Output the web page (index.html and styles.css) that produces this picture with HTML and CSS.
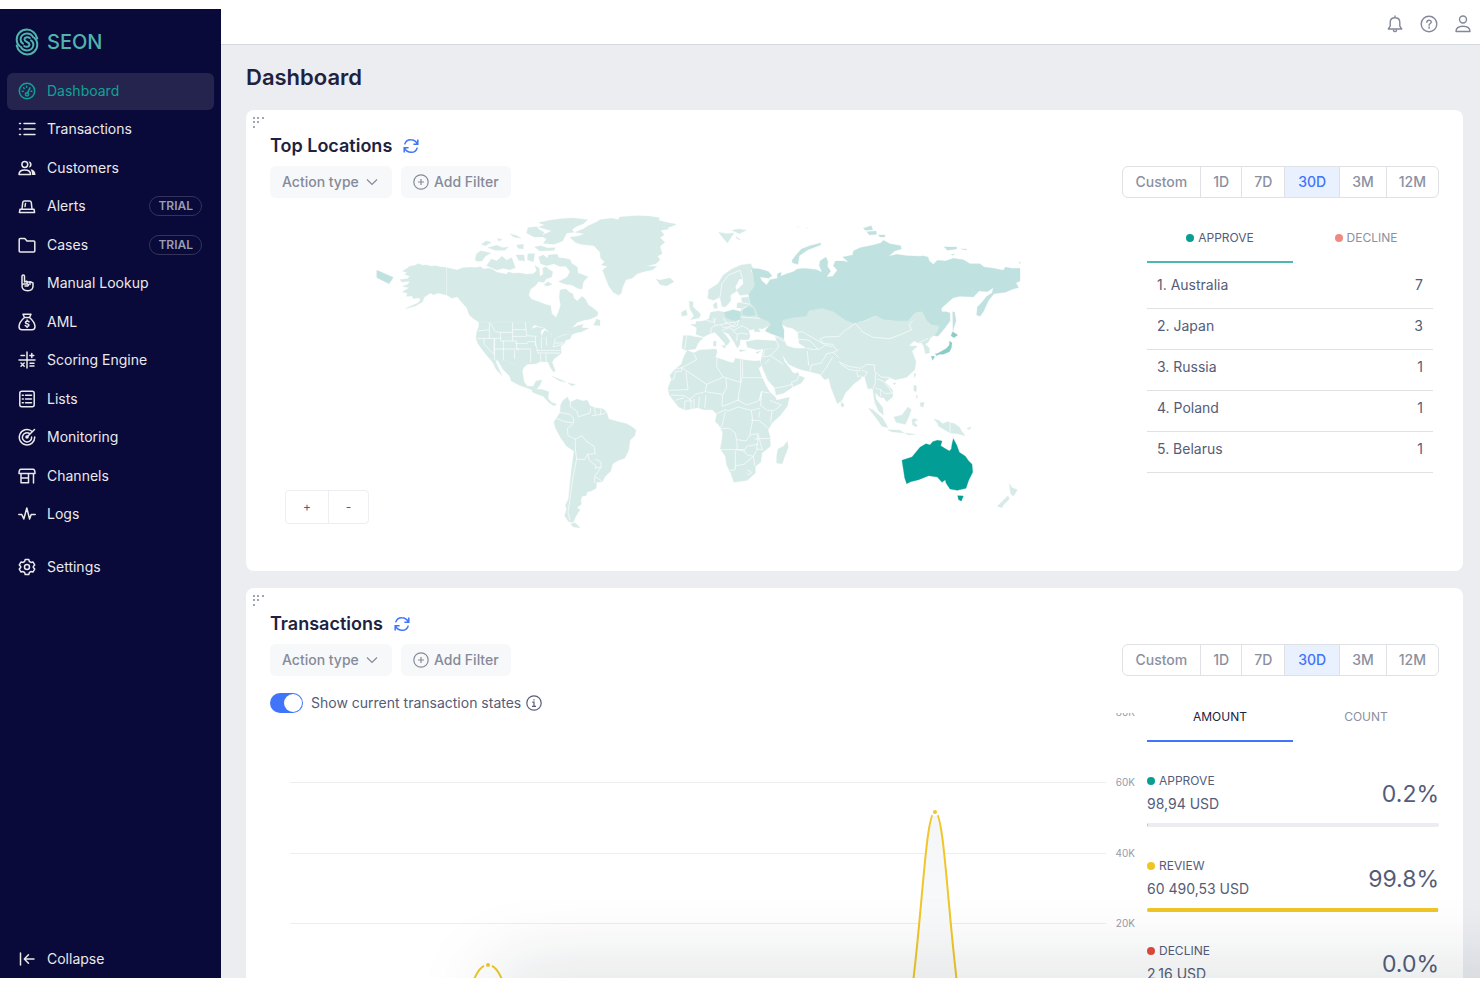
FILE: index.html
```html
<!DOCTYPE html>
<html lang="en">
<head>
<meta charset="utf-8">
<meta name="viewport" content="width=device-width, initial-scale=1">
<title>SEON Dashboard</title>
<link rel="stylesheet" href="styles.css">
</head>
<body>
<svg class="defs" aria-hidden="true">
  <symbol id="refresh" viewBox="0 0 16 16"><path d="M14.8 1.6v4.6h-4.4M1.2 14.4V9.8h4.4M1.7 6.4A6.3 6.3 0 0 1 8 1.7c2.800 0 5 1.500 6.500 4.200M14.300 9.600A6.300 6.300 0 0 1 8 14.300c-2.800 0-5-1.500-6.500-4.200"/></symbol>
  <symbol id="chevron" viewBox="0 0 12 8"><path d="M1 1.500l5 5 5-5"/></symbol>
  <symbol id="plus" viewBox="0 0 16 16"><path d="M8 .8a7.200 7.200 0 1 1 0 14.400A7.200 7.200 0 0 1 8 .8zM8 5v6M5 8h6"/></symbol>
  <symbol id="drag" viewBox="0 0 12 12"><path d="M0 0h2v2H0zM4 0h2v2H4zM9 0h2v2H9zM0 4h2v2H0zM4 4h2v2H4zM0 9h2v2H0z"/></symbol>
</svg>
<div class="app">
  <aside class="sidebar">
    <a class="logo" href="#">
      <svg viewBox="0 0 24 28" aria-hidden="true">
        <path d="M22.300 10.500C21 4.800 16.500 1.600 12 1.600 6 1.600 1.700 6.200 1.700 11.600c0 3 1 5 2.800 6.500"/>
        <path d="M18.200 9.200C16.800 6.600 14.500 5.400 12 5.400c-3.600 0-6.400 2.600-6.400 5.900 0 2 .8 3.500 2.400 4.400"/>
        <path d="M1.700 17.500C3 23.200 7.500 26.400 12 26.400c6 0 10.300-4.600 10.300-10 0-3-1-5-2.800-6.500"/>
        <path d="M5.800 18.800C7.200 21.400 9.500 22.600 12 22.600c3.600 0 6.400-2.600 6.400-5.900 0-2-.8-3.500-2.400-4.400"/>
        <path d="M14.800 10C13.300 8.700 9.500 9 9.500 11.500c0 2.500 5 2.500 5 5 0 2.500-3.800 2.800-5.300 1.500"/>
      </svg>
      <span>SEON</span>
    </a>
    <nav class="nav">
      <a class="item active" href="#"><svg viewBox="0 0 18 18"><circle cx="9" cy="9" r="7.700"/><circle cx="9" cy="12.300" r="1.600"/><path d="M9.500 10.800L12 5.800M4.300 9.200h.9M5.600 5.800l.7.700M8.600 4.200v1M13 9.200h.9"/></svg><span>Dashboard</span></a>
      <a class="item" href="#"><svg viewBox="0 0 18 18"><path d="M6 3.500h11M6 9h11M6 14.500h11M1.500 3.500h1M1.500 9h1M1.500 14.500h1"/></svg><span>Transactions</span></a>
      <a class="item" href="#"><svg viewBox="0 0 18 18"><circle cx="6.800" cy="5.500" r="2.900"/><path d="M1 15.500c0-3 2.200-4.600 5.800-4.600s5.800 1.600 5.800 4.600z"/><path class="solid" d="M10.500 2.500a3 3 0 1 1 .2 6 4.500 4.500 0 0 0-.2-6zM12.500 10.200c3.300.3 5 2.200 5 5.800h-3.400c0-2.300-.5-4-1.600-5.800z"/></svg><span>Customers</span></a>
      <a class="item" href="#"><svg viewBox="0 0 18 18"><path d="M4 12l.7-6.300C4.900 4.400 5.600 4 6.500 4h5c.9 0 1.600.4 1.800 1.700L14 12M2 12.200h14l.6 3.300H1.400zM7.500 6.500L7 9.500"/></svg><span>Alerts</span><span class="badge">TRIAL</span></a>
      <a class="item" href="#"><svg viewBox="0 0 18 18"><path d="M1.200 15V3.500c0-.6.400-1 1-1h4.600L9 5h6.800c.6 0 1 .4 1 1v9c0 .6-.4 1-1 1H2.200c-.6 0-1-.4-1-1z"/></svg><span>Cases</span><span class="badge">TRIAL</span></a>
      <a class="item" href="#"><svg viewBox="0 0 18 18"><path d="M4 10V2.300c0-1.700 2.500-1.700 2.500 0V8l2-.8 1.800.9 1.900-.4 2.800 1.300v3c0 3-2 4.700-5.200 4.700-3.300 0-5.800-1.500-5.800-4.700 0-1.400.8-2 1.800-2h3.700c1.300 0 1.300 2 0 2H7M9 7.500V10M12 8v2.500"/></svg><span>Manual Lookup</span></a>
      <a class="item" href="#"><svg viewBox="0 0 18 18"><path d="M5 1.200h8l-1.500 3.300h-5zM6.500 4.500C3 7.500 1 10.500 1 13.500c0 2.300 1.200 3.300 3 3.300h10c1.800 0 3-1 3-3.300 0-3-2-6-5.500-9"/><path d="M11 8.700c-1-.9-3.600-.8-3.600.7 0 1.600 3.600 1 3.600 2.700 0 1.600-2.800 1.600-3.800.5M9.100 7v1M9.100 13.500v1"/></svg><span>AML</span></a>
      <a class="item" href="#"><svg viewBox="0 0 18 18"><path d="M9 1v16M1 9h16M3 4.500h3.500M11.800 4.500h4M13.800 2.500v4M3 12l3.200 3.200M6.200 12L3 15.200M12 12.200h4M12 15h4"/></svg><span>Scoring Engine</span></a>
      <a class="item" href="#"><svg viewBox="0 0 18 18"><rect x="1.800" y="1.200" width="14.400" height="15.600" rx="2"/><path d="M7.500 5.200h6M7.500 9h6M7.500 12.800h6M4.300 5.200h1M4.300 9h1M4.300 12.800h1"/></svg><span>Lists</span></a>
      <a class="item" href="#"><svg viewBox="0 0 18 18"><path d="M13.500 3A7.700 7.700 0 1 0 16.700 9M11.500 5.500A4.600 4.600 0 1 0 13.600 9M9 9l7.500-7.500"/><circle class="solid" cx="9" cy="9" r="1.800"/></svg><span>Monitoring</span></a>
      <a class="item" href="#"><svg viewBox="0 0 18 18"><path d="M3 2.200h12c1.200 0 2 2 2 4.300H1C1 4.200 1.800 2.200 3 2.200zM3 6.500v9.300h7.500V6.500M15.500 6.500v9.500M3 11h7.500"/></svg><span>Channels</span></a>
      <a class="item" href="#"><svg viewBox="0 0 18 18"><path d="M.8 9.500h3l2 4.500 3-11 2.800 11 1.600-4.500h4"/></svg><span>Logs</span></a>
    </nav>
    <a class="item settings" href="#"><svg viewBox="0 0 18 18"><path d="M7.200 1.500h3.600l.6 2 1.500.9 2-.5 1.800 3L15.300 8.500v1l1.400 1.600-1.800 3-2-.5-1.500.9-.6 2H7.200l-.6-2-1.500-.9-2 .5-1.800-3 1.400-1.600v-1L1.300 6.900l1.800-3 2 .5 1.500-.9z"/><circle cx="9" cy="9" r="2.500"/></svg><span>Settings</span></a>
    <button class="item collapse" type="button"><svg viewBox="0 0 18 18"><path d="M2.500 3v12M16 9H7M10.500 4.800L6.300 9l4.200 4.200"/></svg><span>Collapse</span></button>
  </aside>

  <div class="main">
    <header class="topbar">
      <button type="button" aria-label="Notifications"><svg viewBox="0 0 18 18"><path d="M2.300 14h13.400l-1.900-2.800V7.500c0-3-2-4.700-4.800-4.700S4.200 4.500 4.200 7.500v3.700zM9 1v1.500M7.500 15.500a1.600 1.600 0 0 0 3 0"/></svg></button>
      <button type="button" aria-label="Help"><svg viewBox="0 0 18 18"><circle cx="9" cy="9" r="7.800"/><path d="M6.900 7.300C6.900 4.700 11.300 4.700 11.300 7c0 1.600-2.200 1.500-2.200 3.200M9.100 12v1.300"/></svg></button>
      <button type="button" aria-label="Account"><svg viewBox="0 0 18 18"><circle cx="9" cy="4.500" r="3.500"/><path d="M2 16.500c0-3.500 2.300-5.300 7-5.300s7 1.800 7 5.300z"/></svg></button>
    </header>

    <main class="page">
      <h1>Dashboard</h1>

      <section class="card">
        <svg class="drag"><use href="#drag"/></svg>
        <div class="title"><h2>Top Locations</h2><button type="button" aria-label="Refresh top locations"><svg><use href="#refresh"/></svg></button></div>
        <div class="toolbar">
          <label class="filter select"><select aria-label="Action type"><option>Action type</option></select><svg><use href="#chevron"/></svg></label>
          <button class="filter" type="button"><svg><use href="#plus"/></svg>Add Filter</button>
          <div class="range">
            <button type="button">Custom</button><button type="button">1D</button><button type="button">7D</button><button type="button" class="on" aria-pressed="true">30D</button><button type="button">3M</button><button type="button">12M</button>
          </div>
        </div>
        <div class="body">
          <div class="map">
            <svg viewBox="270 214 865 333" role="img" aria-label="World map of top locations">
              <!-- North America -->
              <g class="land" transform="translate(370 205) scale(.33333)">
                <path d="M228 187L212 186 195 182 182 184 170 180 158 181 145 176 132 182 118 184 112 190 98 198 112 203 104 208 120 214 112 221 90 224 96 231 120 229 114 238 98 244 118 248 108 254 97 261 112 264 110 274 126 273 130 281 146 278 152 284 144 294 130 300 106 311 136 303 158 290 162 277 182 264 190 269 206 264 228 270z"/>
                <path d="M230 188L248 192 262 195 276 189 300 187 318 188 330 185 342 192 358 190 372 196 380 202 410 208 415 201 430 205 450 204 470 208 490 206 500 197 495 181 507 190 510 215 520 206 518 190 528 185 538 194 548 200 545 216 528 222 522 232 505 230 495 243 482 252 476 270 484 282 505 290 526 298 542 302 545 325 558 338 566 320 572 300 568 280 570 255 588 252 598 262 608 266 612 280 622 288 636 274 646 282 655 300 668 308 684 322 682 332 662 342 640 346 622 352 606 368 640 358 634 368 656 370 632 382 625 376 608 386 584 388 562 396 546 402 545 387 522 368 492 360 475 352 327 352 312 342 298 330 290 308 272 288 262 275 246 280 230 270z"/>
                <path d="M327 352L475 352 492 360 484 372 500 366 522 370 512 378 514 394 524 376 542 384 546 400 562 398 584 390 604 386 622 362 634 362 630 380 606 388 600 402 586 406 584 416 572 424 574 445 552 462 546 472 556 498 550 500 540 485 534 470 510 470 498 476 472 478 461 488 456 498 440 480 425 475 412 466 372 464 356 458 340 438 324 416 318 400 321 376 326 368z"/>
                <path d="M357 459L372 465 412 466 426 476 440 480 457 498 462 530 472 544 490 544 498 528 516 525 510 540 500 552 488 556 474 550 448 541 424 528 418 512 400 494 383 466 376 466 384 486 396 512 378 492 368 472z"/>
                <path d="M490 553L514 553 536 560 534 580 544 592 560 598 552 602 538 594 520 574 498 566 486 560z"/>
                <path d="M671 360L680 342 690 346 690 362zM546 514L562 520 588 532 570 528zM594 534L616 538 606 543z"/>
                <path d="M506 53L540 46 575 41 610 39 653 44 640 56 620 64 606 74 612 82 590 84 578 108 552 118 520 115 530 102 512 92 545 78 506 66 524 60zM474 68L500 65 508 74 522 82 514 96 492 96 470 84zM494 126L512 122 532 129 556 128 552 136 510 138zM440 120L460 118 460 132 444 130zM420 86L440 92 454 100 432 96zM334 118L348 108 364 112 346 122zM354 128L380 121 398 128 416 126 404 136 376 136zM316 162L320 146 332 138 362 144 346 154 336 168 318 168zM350 182L364 162 380 168 396 154 410 166 425 158 436 188 420 194 400 190 380 195zM382 100L396 104 386 108zM438 150L462 150 464 168 446 166zM474 146L494 146 490 170 472 164zM506 156L520 150 532 160 536 150 562 148 566 158 584 160 600 164 606 176 622 186 624 204 654 215 640 230 636 252 622 250 606 240 588 238 566 230 592 216 600 200 588 184 568 184 552 176 530 182 512 176zM522 240L534 230 546 238 532 243z"/>
                <g class="lines">
                  <path d="M358 352v22l-36 4M358 374v26M320 400h72M392 382h36M362 356l14 24 16 2v26M428 352v56M428 374h40M428 394h42M342 400v18l30 30v-48M374 400v64M374 432h66M400 408v56M392 408h48v24l8 4M436 416h38M440 432h42M434 436v26M466 352l4 40 30 2M470 410h26l8 36M482 432v40M496 394v30M514 396v34M528 396l2 26M500 436h72M504 444h68M512 446v24M528 446v24M556 400l-6 26 34-10M554 414h30"/>
                </g>
              </g>
              <!-- Greenland and South America -->
              <g class="land" transform="translate(550 205) scale(.33333)">
                <path d="M60 97L84 94 104 86 76 82 100 72 115 62 142 50 150 44 186 40 204 44 210 36 260 32 300 34 328 38 326 46 348 52 378 58 352 66 356 72 332 76 342 90 330 98 344 112 330 124 336 146 322 154 330 164 318 176 288 184 320 184 308 194 280 200 262 206 246 220 228 224 218 246 214 264 206 271 190 262 176 242 166 216 158 196 172 184 154 180 164 170 152 160 150 142 132 122 92 118 76 112zM318 222L330 226 360 220 371 230 350 242 330 238z"/>
                <path d="M32 600L38 588 52 576 60 592 82 582 96 588 112 586 120 602 134 608 160 612 170 622 176 642 204 650 230 656 250 668 258 676 254 692 240 706 236 736 224 760 206 766 188 776 182 798 164 816 158 830 140 832 138 850 124 858 112 860 108 872 96 874 92 886 94 898 80 908 90 914 76 936 70 952 56 950 44 932 50 912 46 902 56 880 60 836 66 784 72 738 50 724 32 698 16 668 12 652 20 638 30 624zM62 956L76 954 90 968 70 966z"/>
                <g class="lines"><path d="M20 640l24 10 26 4v-16l-12-10-28-6M62 590l-2 14 20 14 6 18 16-6 18-6 2-16M134 608l2 20M152 612v18M170 622l-16 6-28 4M70 656l-18 14 2 22 22 10v32M76 702l20-10 12 16 24 16 4 22-24 2-8 16-24-2-4-30M112 746l6 20 20 16-2 8 18-4-2-16-16-8M154 786l-20 28 24 16M134 816v18M80 762l-12 60-8 60-6 40 6 24"/></g>
              </g>
              <!-- Europe, Africa and western Asia -->
              <g class="land" transform="translate(660 215) scale(.33333)">
                <path d="M143 250L146 224 174 206 190 180 216 162 244 150 272 146 278 158 272 166 280 186 284 212 266 238 240 241 230 226 250 206 248 192 238 192 226 216 230 228 212 240 212 258 196 276 186 274 180 246 160 256zM160 268L170 262 172 280 162 280z"/>
                <path d="M130 318L146 312 152 292 174 288 195 292 220 285 242 290 246 280 230 278 232 264 246 262 244 248 266 246 268 264 284 278 296 304 326 316 331 330 306 342 294 340 302 350 284 350 282 342 266 346 270 364 266 374 240 374 240 388 232 400 224 384 206 356 190 350 184 346 200 364 210 378 204 388 196 392 194 384 176 364 164 352 150 356 130 366 108 358 110 338 92 328 108 328 108 320z"/>
                <path d="M70 362L94 362 130 368 116 382 106 402 76 406 66 400zM160 380L168 378 168 394 160 392zM184 392L198 392 194 400zM238 404L258 406 240 410zM288 412L302 408 292 416z"/>
                <path d="M88 258L100 262 98 274 108 284 122 298 118 308 92 314 102 302 90 282zM64 292L78 284 82 300 66 304zM0 196L30 190 40 200 18 212 0 208zM176 52L200 56 222 54 214 66 202 84 190 70zM216 46L236 42 259 46 238 56zM228 64L242 74 232 72zM0 28L48 28 30 36 0 40zM408 36h10M436 38h10"/>
                <path d="M82 406L100 414 120 405 168 402 172 412 166 426 182 432 206 440 220 444 226 430 248 434 280 438 300 437 304 452 296 460 304 482 318 512 330 532 346 546 350 556 388 547 382 574 360 602 336 624 324 646 330 664 331 694 306 714 302 742 286 754 286 774 262 796 222 802 212 774 200 750 196 724 181 702 186 676 188 652 178 632 166 620 170 598 158 584 130 584 114 578 76 585 56 576 42 558 28 540 24 520 34 494 30 480 46 462 64 448 72 424z"/>
                <path d="M382 679L385 696 366 746 350 744 350 724 354 702 370 694z"/>
                <path d="M302 440L310 404 350 400 366 418 374 440 390 460 396 470 404 476 414 472 418 482 434 488 424 504 398 516 372 534 348 540 344 518 324 496 310 464z"/>
                <path d="M258 380L290 374 320 376 350 378 346 364 370 370 380 392 404 400 440 400 416 384 414 352 398 340 380 336 366 328 368 316 400 308 440 304 446 288 486 280 520 290 556 316 604 326 604 490 582 506 556 534 546 556 532 566 514 520 506 490 494 494 480 478 450 470 424 464 408 458 386 448 366 418 350 400 310 402 290 404 262 396z"/>
                <path d="M544 560L553 570 548 577 543 572z"/>
                <path class="russia" d="M274 160L300 162 326 170 336 182 326 190 300 186 306 198 320 210 330 194 352 190 352 176 364 172 362 184 380 176 400 170 412 162 434 160 470 164 486 172 478 152 480 138 498 126 504 140 502 154 512 168 500 186 518 184 532 166 520 152 526 138 550 138 566 142 548 126 578 120 580 108 600 98 640 90 662 84 670 76 690 86 722 92 724 102 704 108 686 124 710 118 740 122 782 124 786 122 804 126 808 138 820 148 832 136 856 138 880 130 910 134 930 146 960 146 972 156 1000 160 1030 166 1036 156 1054 160 1080 160 1080 198 1068 204 1076 218 1060 222 1036 232 1002 236 986 256 970 290 960 304 950 300 952 276 966 262 980 244 996 234 1000 218 982 230 958 228 940 246 900 244 880 248 864 262 844 280 846 290 860 290 870 294 870 318 854 340 834 364 816 360 838 334 814 330 800 318 786 290 766 294 744 318 706 318 668 314 646 302 616 316 586 326 556 316 520 290 486 280 446 288 440 304 400 308 368 316 366 328 372 346 372 370 350 362 320 352 316 346 332 328 324 318 296 306 284 278 270 264 266 238 284 212 280 186z"/>
                <path class="russia" d="M396 136L410 118 424 102 450 92 482 84 482 90 444 104 418 122 414 148 398 144zM610 40L634 32 638 44 616 46zM620 50L648 48 650 58 628 60zM655 60L676 60 674 66 660 66zM852 95L862 96 890 96 890 102 862 106zM904 102L920 102 918 105zM874 118L884 118 878 121zM878 290L884 292 888 318 882 336 879 348zM1078 142h3v3h-3z"/>
                <path class="russia" d="M194 292L220 284 242 290 243 314 228 318 206 312 196 306zM246 298L250 284 264 274 280 280 286 300 264 304z"/>
                <g class="lines"><path d="M180 246l6-40 20-26 34-14M240 166l8 26M134 314l26 8 10-14M152 356l2-18 12-6-6-24M166 332l38-8M190 308l8 16 28-2 14-8M182 330l10 8 24-4 12-8M186 346l22-8 14 8 24-14 22 12M206 328l18 8 10-6M218 346l14 12 10-4 22 4M232 358l-2 20M240 306l60 4M236 318l-4 12M246 282l16-8M242 262l26 6M94 362l38 6M80 364l-6 40M300 350l28 4"/>
                <path d="M102 416l8 18-44 24-20 4M66 458v10l-20 2-4 22-12 2M66 458l74 50 50-22-20-30 2-44M78 470l6 54-56 2M140 508l-4 22-30 8-18 16M190 486l52 16V434M248 436v52h66M246 488l-8 38-4 30 26 14 36-12 10-30M198 488l2 30-12 22-2 34 12-4 40-16M136 530l52 8M32 540l40 2 20 12 2 30M46 556l26-8M74 584v-26h24M102 582v-30M116 580l2-34M134 580l4-40M166 598l30-14 8 4 30-12 40 10 26-6M196 590l-10 44-8 4M182 640h26l18 14 6 36-2 16M182 704h70M232 674l26 4 12-18 22-4 2 32-34 6-8 14-20-4M274 586l4 30-6 30-2 14M272 616h24l30 24M300 556l4-26 24 4M304 532l-2 40 20 14h20l22-16-34-14M300 588l-4 20M336 588l-4 34M294 656l10 38 4 12M292 686l-2 16 16 2M226 708v56l-16 2M226 752l26-4 28-24 4 28M252 708l10 12 18 4 12-22M262 768l8-2 4 8-8 6-6-6M284 672l46-2"/>
                <path d="M314 406l-6 20 24-4 24-26M332 422l38 26M316 446l12-14M344 520l30-6 24-6M398 516l-4-14 16-6 8-16M350 378l6 18M346 364l28 16M414 352l14-2 26 16 14 8 22 12-10-14 14-6 46-2 16-20 24-4 20-20M416 384v-12l32 4 26 26M440 400l22 4 18-2 16-12 22 6M446 452l-4-44M450 470l4-20 30-6 16-28 20-4M482 480l18-24 18-30M520 412l20-10M520 412l22 22 30 20 32 8M490 386l28 2 12 18M572 460l32 12"/></g>
              </g>
              <!-- Eastern Asia and Oceania -->
              <g class="land" transform="translate(840 215) scale(.33333)">
                <path d="M-4 345L20 336 46 325 76 318 106 302 130 314 166 318 204 318 226 294 246 290 260 318 274 330 298 334 290 354 270 370 266 380 256 388 268 400 268 414 256 416 252 396 246 384 236 384 222 378 206 392 232 394 216 408 228 440 224 464 200 487 166 494 150 488 134 500 158 526 158 546 140 560 132 548 118 546 106 532 108 552 128 578 130 600 116 588 104 562 98 520 84 522 74 486 60 482 40 496 -4 520z"/>
                <path d="M86 580L98 584 128 610 144 638 126 634 108 608zM144 644L180 646 192 654 154 650zM194 654L212 656 226 658 208 660zM162 606L186 600 204 576 214 584 206 606 196 628 168 622zM216 614L222 610 234 616 222 620 232 632 228 636 218 630zM222 476L228 476 224 488zM222 510L230 514 228 532 221 526zM240 564L252 562 250 576 242 574zM228 540L234 546 230 550zM160 504L168 504 164 510zM282 612L296 616 308 626 322 620 344 626 358 636 366 650 376 662 352 656 330 654 314 644 296 634 292 624zM380 640L394 636 388 644zM508 806L516 818 532 824 520 844 512 836zM504 842L508 852 490 870 486 878 472 874z"/>
                <g class="lines"><path d="M46 325l22 26 32 16 50 4 36-14 28-12-6-16 10-12M-4 366l12-14 38-27M-4 440l30 14 36 6 18-12 24 2 0 20 20 16 26 2M0 446l28 18 34 4M50 470l4 16 8-4M66 466l16 6-10 16M106 474l0 30-6 16M112 492l20 8 16 20 8 14-20 2-14-12-16-4M122 524v20M236 384l28-14M330 622v32"/></g>
                <path class="australia" d="M186 736L216 726 240 697 258 686 270 690 278 680 292 676 306 678 302 692 314 700 328 708 334 702 336 688 340 671 350 690 358 712 376 724 386 738 396 748 398 772 386 796 378 820 352 826 330 822 318 804 316 794 306 802 292 786 266 782 236 794 212 800 200 806 194 788 190 762zM353 842L370 843 364 858 356 854z"/>
                <path class="japan" d="M329 378L336 384 334 398 328 410 310 418 288 418 306 408 320 400 328 390zM338 350L353 360 342 368 333 362zM274 424L284 424 278 436zM286 416l10 2-6 4z"/>
              </g>
              <path class="land russia" d="M377 270.500l16 7-4 6-12-6z"/>
            </svg>
            <div class="zoom"><button type="button" aria-label="Zoom in">+</button><button type="button" aria-label="Zoom out">-</button></div>
          </div>
          <div class="side">
            <div class="tabs teal">
              <button type="button" class="on"><i class="dot approve"></i>APPROVE</button>
              <button type="button"><i class="dot faded"></i>DECLINE</button>
            </div>
            <table class="places">
              <tr><td>1. Australia</td><td>7</td></tr>
              <tr><td>2. Japan</td><td>3</td></tr>
              <tr><td>3. Russia</td><td>1</td></tr>
              <tr><td>4. Poland</td><td>1</td></tr>
              <tr><td>5. Belarus</td><td>1</td></tr>
            </table>
          </div>
        </div>
      </section>

      <section class="card">
        <svg class="drag"><use href="#drag"/></svg>
        <div class="title"><h2>Transactions</h2><button type="button" aria-label="Refresh transactions"><svg><use href="#refresh"/></svg></button></div>
        <div class="toolbar">
          <label class="filter select"><select aria-label="Action type"><option>Action type</option></select><svg><use href="#chevron"/></svg></label>
          <button class="filter" type="button"><svg><use href="#plus"/></svg>Add Filter</button>
          <div class="range">
            <button type="button">Custom</button><button type="button">1D</button><button type="button">7D</button><button type="button" class="on" aria-pressed="true">30D</button><button type="button">3M</button><button type="button">12M</button>
          </div>
        </div>
        <div class="body amounts">
          <div class="chart">
            <label class="switch"><input type="checkbox" role="switch" checked><span>Show current transaction states</span>
              <svg viewBox="0 0 16 16"><circle cx="8" cy="8" r="7.200"/><path d="M6.300 7.200H8v4M6 11.300h4M8 4.300v1.200"/></svg></label>
            <svg class="plot" viewBox="0 0 865 340" role="img" aria-label="Transaction amount by day">
              <defs><linearGradient id="fill" x1="0" y1="0" x2="0" y2="1"><stop offset="0" stop-color="#f3f5f7"/><stop offset=".5" stop-color="#f8f9fa"/><stop offset="1" stop-color="#fff"/></linearGradient></defs>
              <path class="grid" d="M20 69.500h816M20 140.500h816M20 210.500h816M20 281.500h816"/>
              <path class="area" d="M639 300C652 215 655 99 665 99S678 215 691 300z"/>
              <path class="line" d="M190 300C202 274 206 252 218 252S234 274 246 300M639 300C652 215 655 99 665 99S678 215 691 300"/>
              <circle class="point" cx="218" cy="252" r="3"/><circle class="point" cx="665" cy="99" r="3"/>
              <g class="axis"><text x="865" y="3">80K</text><text x="865" y="73">60K</text><text x="865" y="144">40K</text><text x="865" y="214">20K</text></g>
            </svg>
          </div>
          <div class="side">
            <div class="tabs blue">
              <button type="button" class="on">AMOUNT</button>
              <button type="button">COUNT</button>
            </div>
            <div class="stat">
              <div><p class="name"><i class="dot approve"></i>APPROVE</p><p class="sum">98,94 USD</p></div>
              <strong>0.2%</strong>
              <div class="bar"><span style="width:0.2%"></span></div>
            </div>
            <div class="stat">
              <div><p class="name"><i class="dot review"></i>REVIEW</p><p class="sum">60 490,53 USD</p></div>
              <strong>99.8%</strong>
              <div class="bar"><span style="width:99.8%"></span></div>
            </div>
            <div class="stat">
              <div><p class="name"><i class="dot decline"></i>DECLINE</p><p class="sum">2,16 USD</p></div>
              <strong>0.0%</strong>
              <div class="bar"><span style="width:0%"></span></div>
            </div>
          </div>
        </div>
      </section>
    </main>
    <div class="shade"></div>
  </div>
</div>
</body>
</html>
```
FILE: styles.css
```css
* { box-sizing: border-box; }
body { margin: 0; padding: 9px 0; height: 100vh; overflow: hidden; background: #fff; color: #555c78; font: 14px/20px Inter, sans-serif; }
button, select { font: inherit; color: inherit; background: none; border: 0; padding: 0; margin: 0; }
h1, h2, p { margin: 0; }
svg { fill: none; stroke: currentColor; }
.defs { position: absolute; width: 0; height: 0; }
.app { display: flex; height: 100%; }

.sidebar { flex: none; width: 221px; padding: 19px 7px 0; display: flex; flex-direction: column; background: #09093a; color: #e9eae9; }
.logo { display: flex; align-items: center; gap: 8px; margin: 0 8px 17px; color: #4fb5ac; font-size: 20px; font-weight: 500; line-height: 28px; text-decoration: none; }
.logo svg { width: 24px; height: 28px; stroke-width: 2; stroke-linecap: round; }
.nav { display: flex; flex-direction: column; justify-content: space-between; height: 461px; }
.item { display: flex; align-items: center; gap: 11px; width: 100%; height: 37px; padding: 0 12px 2px 11px; border-radius: 6px; color: inherit; text-decoration: none; font-size: 14px; }
.item svg { flex: none; width: 18px; height: 18px; stroke-width: 1.5; stroke-linejoin: round; stroke-linecap: round; }
.item .solid { fill: currentColor; stroke: none; }
.item.active { background: #24244f; color: #0fa396; }
.badge { margin-left: auto; padding: 0 8px; border: 1px solid #34345b; border-radius: 10px; color: #9a9caf; font-size: 12px; font-weight: 600; line-height: 18px; }
.settings { margin-top: 15px; }
.collapse { margin: auto 0 0; }

.main { position: relative; flex: 1; min-width: 0; display: flex; flex-direction: column; overflow: hidden; background: #ebedf1; }
.topbar { flex: none; display: flex; justify-content: flex-end; align-items: center; gap: 16px; height: 36px; padding: 0 8px 5px; background: #fff; border-bottom: 1px solid #d6d9dd; color: #838897; }
.topbar button, .topbar svg { display: block; width: 18px; height: 18px; stroke-width: 1.4; stroke-linejoin: round; stroke-linecap: round; }
.page { flex: 1; min-height: 0; overflow: hidden; padding: 18px 17px 0 25px; }
h1 { margin-bottom: 19px; color: #1e223f; font-size: 22px; font-weight: 600; line-height: 28px; }
.card { position: relative; margin-bottom: 17px; padding: 24px; border-radius: 8px; background: #fff; }
.drag { position: absolute; top: 7px; left: 7px; width: 12px; height: 12px; fill: #a0a5b1; stroke: none; }
.title { display: flex; align-items: center; gap: 11px; }
h2 { color: #1e223f; font-size: 18px; font-weight: 600; line-height: 24px; }
.title button, .title svg { display: block; width: 16px; height: 16px; color: #3f74fb; stroke-width: 1.5; }
.toolbar { display: flex; gap: 9px; margin-top: 8px; }
.filter { display: flex; align-items: center; height: 32px; padding: 0 12px; gap: 5px; border-radius: 6px; background: #f7f8f9; color: #858a9a; font-weight: 500; }
.filter svg { width: 16px; height: 16px; stroke-width: 1.2; }
.select svg { width: 12px; height: 8px; pointer-events: none; }
.filter.select { gap: 7px; padding-right: 14px; }
.filter select { appearance: none; outline: 0; }
.range { display: flex; margin-left: auto; border: 1px solid #dfe1e5; border-radius: 6px; overflow: hidden; color: #8b909f; font-weight: 500; }
.range button { padding: 0 12px; line-height: 30px; }
.range button:first-child, .range .on { padding: 0 13px; }
.range button + button { border-left: 1px solid #dfe1e5; }
.range .on { background: #eaf1fe; color: #3f74fb; }

.body { display: grid; grid-template-columns: minmax(0, 1fr) 292px; gap: 12px; margin-top: 16px; }
.body.amounts { margin-top: 17px; }
.map { position: relative; }
.map > svg { display: block; width: 100%; }
.land { fill: #d6eae8; stroke: #d6eae8; stroke-width: 1; stroke-linejoin: round; }
.lines { fill: none; stroke: #fff; stroke-width: 2; }
.russia { fill: #bfe1df; stroke: #c9e5e3; }
.japan { fill: #8bccc6; stroke: #8bccc6; }
.australia { fill: #029d94; stroke: #029d94; }
.zoom { position: absolute; left: 15px; bottom: 23px; display: flex; border: 1px solid #eceef1; border-radius: 4px; background: #fff; font-size: 12px; line-height: 32px; }
.zoom button { width: 39px; }
.zoom button:first-child { width: 43px; border-right: 1px solid #eceef1; }

.tabs { display: grid; grid-template-columns: 1fr 1fr; font-size: 12px; color: #8b909f; }
.tabs button { display: flex; align-items: center; justify-content: center; gap: 4px; height: 49px; border-bottom: 2px solid transparent; }
.teal .on { border-color: #4bb9ae; color: #555c78; }
.blue .on { border-color: #3f74fb; color: #1e223f; }
.dot { width: 8px; height: 8px; border-radius: 50%; }
.approve { background: #0a9d92; }
.faded { background: #f08a80; }
.review { background: #efc526; }
.decline { background: #e04c3e; }
.places { width: 286px; margin-top: 4px; border-collapse: collapse; }
.places td { height: 41px; padding: 0 10px 5px; border-bottom: 1px solid #dfe1e5; }
.places td:last-child { text-align: right; }

.switch { display: flex; align-items: center; height: 20px; }
.switch input { appearance: none; flex: none; display: flex; justify-content: flex-end; width: 33px; height: 20px; margin: 0 8px 0 0; padding: 1px; border-radius: 10px; background: #3f74fb; }
.switch input::before { content: ""; width: 18px; height: 18px; border-radius: 50%; background: #fff; }
.switch svg { width: 16px; height: 16px; margin-left: 5px; stroke-width: 1.2; }
.plot { display: block; width: 100%; }
.grid { stroke: #eceef0; }
.area { fill: url(#fill); stroke: none; }
.line { stroke: #f0c628; stroke-width: 2; }
.point { fill: #f0c628; stroke: #fff; stroke-width: 2; }
.axis { fill: #969bab; stroke: none; font-size: 10px; text-anchor: end; }

.stat { display: grid; grid-template-columns: 1fr auto; align-items: center; padding-top: 28px; }
.name { display: flex; align-items: center; gap: 4px; font-size: 12px; line-height: 22px; }
.sum { line-height: 24px; }
.stat strong { padding-top: 2px; font-size: 23px; font-weight: 400; line-height: 32px; }
.bar { grid-column: 1 / -1; height: 4px; margin-top: 7px; border-radius: 2px; background: #ebedf1; overflow: hidden; }
.bar span { display: block; height: 100%; background: #efc526; }
.shade { position: absolute; left: 270px; right: -80px; top: 100%; height: 40px; border-radius: 20px; box-shadow: 0 0 80px rgba(20, 30, 40, .22); pointer-events: none; }
```
